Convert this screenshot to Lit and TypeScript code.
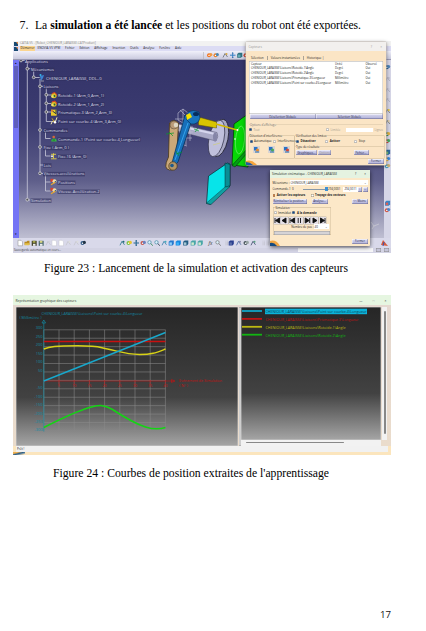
import { LitElement, html, svg, css } from "lit";
import { customElement } from "lit/decorators.js";

const txt = (x: number, y: number, size: number, fill: string, s: string, len?: number, anchor = "start") =>
  len
    ? svg`<text x=${x} y=${y} font-size=${size} fill=${fill} text-anchor=${anchor} textLength=${len} lengthAdjust="spacingAndGlyphs">${s}</text>`
    : svg`<text x=${x} y=${y} font-size=${size} fill=${fill} text-anchor=${anchor}>${s}</text>`;

const shared = css`
  * { box-sizing: border-box; }
  svg { display: block; }
  .btn {
    background: linear-gradient(#dadaf0, #adadd6);
    box-shadow: inset -.4px -.4px 0 #66668c, inset .4px .4px 0 #fff;
    height: 5px;
    display: flex;
    align-items: center;
    justify-content: center;
    white-space: nowrap;
    color: #222244;
  }
  .off { color: #a8a090; }
  .radio { width: 3px; height: 3px; border-radius: 50%; background: #fff; box-shadow: inset 0 0 0 .4px #888; flex: none; margin-right: 1.5px; }
  .radio.on { background: #124a8c; }
  .row { display: flex; align-items: center; white-space: nowrap; }
  .grow { flex: 1; }
  b { font-weight: 700; }
`;

/* ---------- Small toolbar glyphs ---------- */
const glyph = (kind: string, a: string, b: string) => {
  switch (kind) {
    case "page": return svg`<path d="M1 .5h3l1.500 1.500v4h-4.500z" fill="#fff" stroke=${a} stroke-width=".5"/>`;
    case "folder": return svg`<path d="M.5 2h2l1-1h2v4h-5z" fill=${a}/><path d="M1 3.500h5l-1 2h-4.500z" fill=${b}/>`;
    case "disk": return svg`<rect x=".7" y="1" width="5" height="5" fill=${a}/><rect x="1.800" y="1" width="2.600" height="2" fill=${b}/><rect x="2" y="4" width="2.500" height="2" fill="#eee"/>`;
    case "lens": return svg`<circle cx="2.500" cy="2.500" r="1.700" fill="#d9f0fa" stroke=${a} stroke-width=".7"/><path d="M3.700 3.700l2.200 2.200" stroke=${b} stroke-width=".9"/>`;
    case "move": return svg`<path d="M3.200 .5v5.500M.5 3.200h5.500" stroke=${a} stroke-width="1"/><path d="M2.200 1.500l1-1.300 1 1.300M2.200 5l1 1.300 1-1.300" fill=${b}/>`;
    case "cube": return svg`<path d="M.7 2l1.500-1.300h3.600v3.600l-1.300 1.400h-3.800z" fill=${a}/><path d="M1.400 2.600h2.500v2.500h-2.500z" fill=${b}/>`;
    case "gear": return svg`<circle cx="2.500" cy="3.200" r="2" fill=${a}/><circle cx="4.300" cy="2.600" r="1.600" fill=${b}/><circle cx="2.500" cy="3.400" r=".7" fill="#fff"/>`;
    case "fx": return svg`<text x="0" y="5" font-size="5" font-style="italic" fill=${a}>fx</text>`;
    case "dots": return svg`<path d="M3 1v5M4.500 1v5" stroke=${a} stroke-width=".4" stroke-dasharray=".6 .6"/>`;
    default: return svg`<path d="M1 5.500l2-4 2.500 3.500" fill="none" stroke=${a} stroke-width=".8"/><circle cx="4.500" cy="2" r="1" fill=${b}/>`;
  }
};
const icon = (x: number, y: number, kind: string, a: string, b: string) =>
  svg`<g transform="translate(${x} ${y})">${glyph(kind, a, b)}</g>`;

type Ic = [number, string, string, string];
const bottomIcons: Ic[] = [
  [4, "page", "#888", ""], [11, "folder", "#b88a22", "#e4c04a"], [18, "disk", "#45452a", "#a8a84d"], [25, "disk", "#4e6b70", "#d8d480"],
  [32, "x", "#c2c2cc", "#d4d4dc"], [38, "page", "#c5c5cc", ""], [45, "page", "#c5c5cc", ""], [52, "x", "#c5c5cc", "#ddd"], [60, "x", "#c5c5cc", "#ddd"], [67, "gear", "#355f8a", "#234"],
  [106, "x", "#26758d", "#267"], [113, "gear", "#7ac243", "#e8c530"], [120, "move", "#256790", "#17567f"], [127, "gear", "#c65a50", "#6b82c0"],
  [134, "lens", "#4a87a5", "#385"], [141, "lens", "#4a87a5", "#345"], [148, "x", "#367fa8", "#4ab"], [155, "cube", "#2678ce", "#8fd0fa"],
  [162, "cube", "#1686df", "#3db5fa"], [169.500, "cube", "#235c83", "#a7c8d6"], [177, "cube", "#4aa6a8", "#d5ecd0"], [184, "cube", "#4aa6a8", "#d5ecd0"],
  [195.500, "fx", "#333", ""], [202, "lens", "#777", "#777"], [210, "dots", "#888", ""], [215, "cube", "#2a3f90", "#5b6ea8"], [222.500, "x", "#4a68a0", "#88a"],
  [230, "gear", "#48555c", "#97a4a4"], [237, "x", "#384668", "#58a080"], [247, "dots", "#999", ""], [251, "dots", "#999", ""],
];
const sideIcons: [number, string, string, string][] = [
  [64, "gear", "#28608f", "#4b83b8"], [76, "x", "#aab", "#bbc"], [87, "x", "#aab", "#ccd"], [97, "x", "#aab", "#ccd"],
  [108, "x", "#776", "#e8c83a"], [119, "x", "#776", "#dca"], [131, "gear", "#3f8c52", "#e0b040"], [138, "gear", "#d04838", "#49a860"],
  [149, "cube", "#2d6c9e", "#79c07c"], [156, "gear", "#e8b43a", "#3c8adc"], [163, "gear", "#4c9fc0", "#c8b070"], [200, "cube", "#3a87c6", "#d86058"], [207, "gear", "#d05848", "#4d86c9"],
];

/* ---------- Specification tree ---------- */
interface Node { x: number; y: number; s: string; w: number; k?: string; }
const nodes: Node[] = [
  { x: 25, y: 61, s: "Applications", w: 23 },
  { x: 31, y: 69.300, s: "Mécanismes", w: 23 },
  { x: 46, y: 78, s: "CHENIOUR_LARAISSE, DDL=0", w: 55.500, k: "mech" },
  { x: 43.500, y: 86.500, s: "Liaisons", w: 15 },
  { x: 58, y: 95.500, s: "Rotoïde.1 (Arm_0,Arm_1)", w: 46, k: "joint" },
  { x: 58, y: 104, s: "Rotoïde.2 (Arm_1,Arm_2)", w: 46, k: "joint" },
  { x: 58, y: 112.700, s: "Prismatique.3 (Arm_2,Arm_3)", w: 54, k: "prism" },
  { x: 58, y: 121.300, s: "Point sur courbe.4 (Arm_3,Arm_0)", w: 63, k: "point" },
  { x: 43.500, y: 130.200, s: "Commandes", w: 24 },
  { x: 58, y: 139, s: "Commande.1 (Point sur courbe.4,Longueur)", w: 82, k: "cmd" },
  { x: 43.500, y: 147.500, s: "Fixe ( Arm_0 )", w: 25.500 },
  { x: 58, y: 156.300, s: "Fixe.16 (Arm_0)", w: 28.500, k: "fix" },
  { x: 43.500, y: 165, s: "Lois", w: 7.500 },
  { x: 43.500, y: 173.700, s: "Vitesses-accélérations", w: 41 },
  { x: 58, y: 182.300, s: "Positions", w: 17, k: "pos" },
  { x: 58, y: 191.300, s: "Vitesse-Accélération.2", w: 41.500, k: "pos" },
  { x: 31, y: 200.200, s: "Simulation", w: 20 },
];
const treeIcon = (n: Node) => {
  const x = n.x - 7, y = n.y - 3;
  if (n.k === "mech") return svg`<path d="M${x + 1} ${y + 1}l4-1-1 3-2 3z" fill="#3d83d1"/><circle cx=${x + 1.500} cy=${y} r="1" fill="#35b8e8"/><path d="M${x + 2} ${y + 6}h3" stroke="#bbb" stroke-width=".7"/>`;
  if (n.k === "joint") return svg`<circle cx=${x + 3} cy=${y + 3} r="2.700" fill="#d9bd28"/><circle cx=${x + 1.500} cy=${y + 4} r="1.300" fill="#efe36a"/><path d="M${x + 1} ${y + 1}l3-1 2 3" stroke="#d63a22" stroke-width="1" fill="none"/><circle cx=${x + 3.500} cy=${y + 3.500} r=".9" fill="#26633a"/>`;
  if (n.k === "prism") return svg`<rect x=${x} y=${y} width="5.600" height="6" fill="#e8c92c"/><path d="M${x + 1} ${y + 1}l4 3v-4" stroke="#28384a" fill="none"/><path d="M${x} ${y}h2v2h-2z" fill="#d83"/>`;
  if (n.k === "point") return svg`<path d="M${x} ${y + 6}q1-4 3-3t3-4" stroke="#f1e9b0" fill="none"/><path d="M${x + 1} ${y}l3 5" stroke="#c9a32b"/><circle cx=${x + 4} cy=${y + 4} r="1.200" fill="#fff"/>`;
  if (n.k === "cmd") return svg`<path d="M${x + .3} ${y + 5.500}q0-3 2.700-3t2.700 3z" fill="#35b842"/><circle cx=${x + 2.700} cy=${y + 1} r="1.300" fill="#d06a38"/><path d="M${x + 1.500} ${y + 4}h2.500" stroke="#155c25" stroke-width=".8"/>`;
  if (n.k === "fix") return svg`<path d="M${x} ${y + 1}h5M${x + 2.500} ${y}v5M${x} ${y + 5.500}h5.500" stroke="#e2d34b" stroke-width=".9"/><circle cx=${x + 1} cy=${y + 3} r="1" fill="#eee"/>`;
  return svg`<rect x=${x - .5} y=${y - .5} width="3" height="3" fill="#d8432d"/><circle cx=${x + 3.500} cy=${y + 2} r="2" fill="#ece0b0"/><path d="M${x} ${y + 5.500}l5-3" stroke="#e6a62e" stroke-width="1.300"/><circle cx=${x + 4.500} cy=${y + 2.500} r=".8" fill="#33558a"/>`;
};
const bullets = [[27.300, 68.700], [33.700, 77.300], [40, 86.300], [46.300, 94.800], [46.300, 103.300], [46.300, 112], [40, 130], [40, 147], [40, 173.300], [27.300, 199.700], [21, 60.500]];

const LIAISON = "CHENIOUR_LARAISSE\\Liaisons\\";
const sensors = [
  ["Rotoïde.1\\Angle", "Degré"], ["Rotoïde.2\\Angle", "Degré"],
  ["Prismatique.3\\Longueur", "Millimètre"], ["Point sur courbe.4\\Longueur", "Millimètre"],
];

@customElement("sensor-dialog")
class SensorDialog extends LitElement {
  static styles = [shared, css`
    :host { display: flex; flex-direction: column; width: 140px; height: 123px; background: #fbe5c5; font: 2.9px/4px "Open Sans", sans-serif; color: #222; border-radius: 1px; box-shadow: 0 0 0 .4px #cfc6bd, 0 1px 4px #0008; position: relative; }
    .title { height: 9px; background: #f2f0ee; color: #999; padding: 0 4px 0 2.500px; gap: 8px; font-size: 3.2px; }
    .tabs { height: 9.500px; padding: 3px 5px 0; gap: 4px; font-size: 3px; }
    .tabs span + span { box-shadow: -.6px 0 0 #777; padding-left: 3px; }
    .list { background: #fff; margin: 0 3px; height: 53px; box-shadow: inset 0 0 0 .4px #aaa; padding: 1px 2px; display: grid; grid-template-columns: 84px 30.500px 1fr; grid-auto-rows: 4.700px; align-content: start; white-space: nowrap; }
    .pair { display: grid; grid-template-columns: 1fr 1fr; margin: 0 3px; padding: .5px; height: 6px; column-gap: .5px; }
    .opt { height: 9px; margin: 5px 3px 0; color: #777; box-shadow: 0 -.4px 0 #cdbb9e; display: flex; flex-direction: column; }
    .cap { margin-top: -2px; margin-left: 1px; background: #fbe5c5; align-self: flex-start; }
    .opt .row { margin-top: 1px; }
    .field { flex: 1; height: 4px; background: #fff; max-width: 27px; margin: 0 1px 0 6px; }
    .cols { display: grid; grid-template-columns: 45px 1fr; gap: 1.500px; margin: 2.500px 2.500px 0; height: 22px; }
    .set { box-shadow: 0 0 0 .4px #c2ae8c; display: flex; flex-direction: column; }
    .set > .row { margin-top: 1px; padding-left: 1px; }
    .types { display: flex; flex-direction: column; box-shadow: 0 -.4px 0 #c2ae8c; margin-top: 4px; }
    .types .row { margin-top: 1px; padding-left: 1px; }
    .icons { display: flex; justify-content: space-around; padding-top: 2.500px; }
    .foot { padding: 0 2px 1px; justify-content: flex-end; position: relative; flex: 1; }
    .corner { position: absolute; left: 0; bottom: 0; }
  `];
  render() {
    return html`
      <div class="row title"><span class="grow">Capteurs</span><span>?</span><span>×</span></div>
      <div class="row tabs"><span>Sélection</span><span>Valeurs instantanées</span><span>Historique |</span></div>
      <div class="list"><span>Capteur</span><span>Unité</span><span>Observé</span>
        ${sensors.map(([n, u]) => html`<span>${LIAISON}${n}</span><span>${u}</span><span>Oui</span>`)}
      </div>
      <div class="pair"><div class="btn">Désélection Globale</div><div class="btn">Sélection Globale</div></div>
      <div class="opt"><span class="cap">Options d'affichage</span>
        <div class="row off"><i class="radio on"></i><span class="grow">Tout</span><i class="radio"></i>Limitée<i class="field"></i>Lignes</div></div>
      <div class="cols">
        <div class="set"><span class="cap">Détection d'interférence</span>
          <div class="row"><i class="radio on"></i>Automatique&nbsp;&nbsp;<i class="radio"></i>Interférences</div>
          <div class="icons">${["#e88a2d", "#4ca65a", "#d84834"].map((c) => html`<svg width="7" height="7" viewBox="0 0 7 7"><rect width="7" height="7" fill="#d9d4d2"/><rect x="1" y="1" width="3.500" height="3.500" fill="#2b72c4"/><circle cx="4.500" cy="4" r="1.600" fill=${c}/><path d="M2 6h4" stroke="#246bb0"/></svg>`)}</div>
        </div>
        <div class="set"><span class="cap">Vérification des limites</span>
          <div class="row"><i class="radio on"></i><b class="grow">Désactiver</b><i class="radio"></i><b class="grow">Activer</b><i class="radio"></i><span class="grow">Stop</span></div>
          <div class="types"><span class="cap">Type de résultats</span>
            <div class="row"><div class="btn" style="width:21px">Graphiques...</div><div class="btn off" style="width:13px;margin-left:1px">Options</div><span class="grow"></span><div class="btn" style="width:15px;margin-right:15px">Fichier...</div></div>
          </div>
        </div>
      </div>
      <div class="row foot"><svg class="corner" width="12" height="5" viewBox="0 0 12 5"><path d="M0 1q6-2 11 4h-11z" fill="#f5a43a"/><path d="M0 2q4 0 7 3h-7z" fill="#205ca0"/></svg><div class="btn" style="width:16px">Fermer</div></div>`;
  }
}

@customElement("kinematic-dialog")
class KinematicDialog extends LitElement {
  static styles = [shared, css`
    :host { display: flex; flex-direction: column; width: 100px; height: 76px; background: #fce8c8; font: 2.9px/4px "Open Sans", sans-serif; color: #222; border-radius: 1px; box-shadow: 0 1px 4px #000a; position: relative; }
    .title { height: 8px; background: #e5f3e1; padding: 0 4px 0 2px; font-size: 3px; gap: 8px; }
    .body { display: flex; flex-direction: column; padding: 1.500px 2.500px 0; }
    .body > .row { height: 6.200px; }
    .combo { background: #fff; height: 5px; display: flex; justify-content: space-between; align-items: center; padding: 0 1px; flex: 1; }
    .slider { width: 23px; height: .8px; background: #8799aa; margin: 0 3px 0 9px; }
    .thumb { width: 2.500px; height: 4px; background: #3f91d4; margin-left: -3px; margin-right: .5px; }
    .box { width: 2.800px; height: 2.800px; background: #fff; box-shadow: inset 0 0 0 .4px #97886d; margin-right: 1.500px; }
    .box.on { background: #e87832; }
    .set { width: 58px; height: 28px; box-shadow: inset 0 0 0 .4px #c6b28f; margin-top: 2.500px; display: flex; flex-direction: column; padding: 0 1px; }
    .cap { margin-top: -1.500px; margin-left: 2px; background: #fce8c8; align-self: flex-start; }
    .play { display: grid; grid-template-columns: repeat(7, 7px); gap: .6px; margin-top: 2px; }
    .play svg { background: #e5e0e6; box-shadow: 0 0 0 .3px #999; }
    .set .row { margin-top: 1px; }
    .set .steps { justify-content: flex-end; height: 5.500px; padding-right: 1px; margin-top: .5px; }
    .bar { height: 4px; background: #d5d3d6; box-shadow: inset 0 0 0 .4px #999; margin-top: 1px; }
    .foot { position: absolute; right: 2px; bottom: 2.500px; width: 16px; }
    .corner { position: absolute; left: 0; bottom: 0; }
  `];
  render() {
    const shapes = ["M1 1v5M5.500 1v5l-4-2.500z", "M5 1v5l-4-2.500z", "M1 1v5M5.500 1v5l-4-2.500z", "M2.200 1v5M4.500 1v5", "M5.700 1v5M1.200 1v5l4-2.500z", "M2 1v5l4-2.500z", "M6 1v5M1.500 1v5l4-2.500z"];
    return html`
      <div class="row title"><span class="grow">Simulation cinématique - CHENIOUR_LARAISSE</span><span>?</span><span>×</span></div>
      <div class="body">
        <div class="row"><span style="width:17px">Mécanisme :</span><span class="combo"><span>CHENIOUR_LARAISSE</span><span>⌄</span></span></div>
        <div class="row"><span>Commande.1 &nbsp;0</span><i class="slider"></i><i class="thumb"></i><span>294,0001</span><span class="combo" style="margin-left:3px">294,0011</span><div class="btn" style="width:4px">÷</div><div class="btn" style="width:5px;margin-left:1px">...</div></div>
        <div class="row"><i class="box on"></i><b style="width:34px">Activer les capteurs</b><i class="box"></i><b>Traçage des vecteurs</b></div>
        <div class="row"><div class="btn" style="width:34px">Réinitialiser la position...</div><div class="btn" style="width:16px;margin-left:5px">Analyse...</div><span class="grow"></span><div class="btn" style="width:16px">&lt;&lt; Moins</div></div>
        <div class="set"><span class="cap">Simulation</span>
          <div class="row"><i class="radio"></i>Immédiat &nbsp;<i class="radio on"></i><b>A la demande</b></div>
          <div class="play">${shapes.map((d) => html`<svg width="7" height="7" viewBox="0 0 7 7"><path d=${d} fill="#111" stroke="#111" stroke-width=".9"/></svg>`)}</div>
          <div class="row steps">Nombre de pas :<span class="combo" style="max-width:15px">40<span>⌄</span></span></div>
          <div class="bar"></div>
        </div>
      </div>
      <svg class="corner" width="12" height="7" viewBox="0 0 12 7"><path d="M0 2q6-2 10 5h-10z" fill="#f2a845"/><path d="M0 4q4-1 7 3h-7z" fill="#164b80"/></svg>
      <div class="btn foot">Fermer</div>`;
  }
}

@customElement("cad-window")
class CadWindow extends LitElement {
  static styles = [shared, css`
    :host { display: block; width: 378px; height: 212px; position: relative; font: 3px/5px "Open Sans", sans-serif; color: #222; }
    .title { height: 5.500px; background: #f2f2f2; color: #888; padding-left: 1px; gap: 2px; font-size: 3.100px; }
    .menu { height: 5px; background: #dcdcf4; padding-left: 1px; gap: 4.800px; font-size: 3.100px; }
    .menu svg { margin-right: -2.800px; }
    .first { background: #fbd590; padding: 0 .5px; margin-right: -2.500px; }
    .tools { height: 9px; background: linear-gradient(#f0f0fa, #c6c6dc); box-shadow: inset 0 -.6px 0 #6e6e8a; width: 378px; }
    .mid { display: grid; grid-template-columns: 6px 1fr 7px; height: 178px; }
    .scroll { background: #7474f5; display: flex; flex-direction: column; justify-content: space-between; align-items: center; color: #000; padding: 1px 0; }
    .track { width: 4.500px; height: 62px; background: #5f5fbd; }
    .side { background: #d6d6e7; }
    .bottom { background: #d9d9ea; }
    .status { height: 5px; background: #d3d3e4; padding-left: 1px; font-size: 2.800px; color: #444; }
    .command { width: 75px; height: 4px; background: #f6f6f8; margin-right: 2px; }
    .cell { width: 5px; height: 4px; background: #c5c5d9; box-shadow: inset 0 0 0 .4px #888; margin: 0 2px 0 1px; }
    sensor-dialog { position: absolute; left: 233px; top: 1.500px; }
    kinematic-dialog { position: absolute; left: 257px; top: 129.500px; }
  `];
  logo() {
    return html`<svg width="4" height="4" viewBox="0 0 4 4"><rect width="4" height="4" fill="#194a72"/><path d="M2 0h2v2.500z" fill="#e5884a"/></svg>`;
  }
  render() {
    return html`
      <div class="row title">${this.logo()}CATIA V5 - [Robot_CHENIOUR_LARAISSE.CATProduct]</div>
      <div class="row menu">${this.logo()}<span class="first">Démarrer</span><span>ENOVIA V5 VPM</span>${["Fichier", "Edition", "Affichage", "Insertion", "Outils", "Analyse", "Fenêtre", "Aide"].map((m) => html`<span>${m}</span>`)}</div>
      <svg class="tools" width="378" height="9" viewBox="0 0 378 9">
        <path d="M190.500 1v7" stroke="#aaa" stroke-width=".5"/>
        ${icon(193.500, 1, "gear", "#ef7626", "#f39b42")}${icon(200, 1, "gear", "#e98432", "#4b88b2")}${icon(209, 1, "x", "#666b70", "#d8a942")}${icon(216.500, 1, "move", "#3680c6", "#3b6fae")}${icon(223.500, 1, "cube", "#2e7180", "#62a8b5")}${icon(230, 1, "gear", "#d24835", "#6a4")}
      </svg>
      <div class="mid">
        <div class="scroll"><span>▴</span><i class="track"></i><span class="grow"></span><span>▾</span></div>
        <svg width="365" height="178" viewBox="19 60 365 178">
          <defs><linearGradient id="sky" x1="0" y1="0" x2="0" y2="1"><stop offset="0" stop-color="#343469"/><stop offset=".35" stop-color="#3b3b70"/><stop offset=".68" stop-color="#5f5f8b"/><stop offset="1" stop-color="#bfbfd2"/></linearGradient></defs>
          <rect x="19" y="60" width="365" height="178" fill="url(#sky)"/>
          <path d="M27.300 61v139h3M27.300 68.700h3M33.700 71v6.500h6M40 79v94.500h3M40 86.300h3M40 165h3M46.300 88v33.500h6M46.300 95h5M46.300 103.500h5M46.300 112h5M45.500 132v6.500h5M45.500 149v7h5M45.500 175v16h5M45.500 182h5M21 60.500h4" fill="none" stroke="#c9c9da" stroke-width=".8"/>
          ${bullets.map(([x, y]) => svg`<circle cx=${x} cy=${y} r="1.400" fill="#55555f" stroke="#ddd" stroke-width=".7"/>`)}
          ${nodes.map((n) => svg`<rect x=${n.x - .5} y=${n.y - 1.800} width=${n.w + 1} height="4.500" fill="#2e2e5b" opacity=".6"/>${txt(n.x, n.y + 1.500, 4, "#dcdce8", n.s, n.w)}${n.k ? treeIcon(n) : ""}`)}

          <g stroke-linejoin="round">
            <path d="M234 124l14-10v53l-16-2z" fill="#06d606" stroke="#053d05" stroke-width=".8"/>
            <path d="M232 165.500l3 1.500 13-15v-4z" fill="#069b18" stroke="#052d08" stroke-width=".5"/>
            <ellipse cx="240" cy="140" rx="4.500" ry="14" fill="none" stroke="#b4ffb0" stroke-width=".4" transform="rotate(5 240 140)"/>
            <path d="M208.500 176l19-13 2.500 1v22l-19.500 18.500-4-1z" fill="#07e4e9" stroke="#05282e" stroke-width=".7"/>
            <path d="M225 163l5 1.500v21l-5 2z" fill="#0a8d94" stroke="#05282e" stroke-width=".5"/>
            <path d="M206.500 203l4.500 1.500 19-18-5 .5z" fill="#119fa2" stroke="#05282e" stroke-width=".4"/>
            <ellipse cx="219.500" cy="138" rx="8.500" ry="19" transform="rotate(12 219.500 138)" fill="#a8a8c5" stroke="#20202f" stroke-width=".8"/>
            <ellipse cx="216.500" cy="138.500" rx="7.500" ry="18.500" transform="rotate(12 216.500 138.500)" fill="#c0c0dc" stroke="#33334a" stroke-width=".7"/>
            <path d="M179 124l38 8.500q2 4-1 8.500l-39-10z" fill="#a9a9c7" stroke="#404058" stroke-width=".4"/>
            <path d="M179 126l36 8" stroke="#d6d6ee" stroke-width="2"/>
            <ellipse cx="215" cy="137" rx="2" ry="4.500" fill="#8585a8"/>
            <g fill="none" stroke="#c4c4d6" stroke-width=".6"><path d="M178 113l5-4 5 4v6l-5 4-5-3zM183 109v36M175 119h12M179 127h14M179 132h14M180 138h12M186 122v23M190 124v17M178 143l9 3M180 110l8 8"/></g>
            <path d="M198.500 117l18 5v6l-18-3z" fill="#d8c400" stroke="#5b5200" stroke-width=".5"/>
            <path d="M216 124l21 6" stroke="#d4b900" stroke-width="1.500"/><circle cx="237.500" cy="130" r="1" fill="#fff"/><circle cx="235" cy="139" r=".8" fill="#fff"/>
            <path d="M169.500 123q4-5 9 0l-2 36q0 12-7 11t-1-13z" fill="#caa879" stroke="#493719" stroke-width=".8"/>
            <circle cx="174" cy="125" r="4" fill="#b99a77" stroke="#50412b" stroke-width=".5"/><circle cx="176" cy="125" r="2.300" fill="#ded7c3"/>
            <path d="M185 115l7 5-14 42q-3 4-6 1z" fill="#176fba" stroke="#07375f" stroke-width=".8"/>
            <path d="M188 123l-13 37" stroke="#34a5ec" stroke-width="1"/>
            <circle cx="173" cy="166" r="4.200" fill="#b39567" stroke="#473516" stroke-width=".7"/><circle cx="172" cy="165.500" r="1.800" fill="#1e5b8a"/>
            <path d="M188 112q5-3 11 0l1 6q-2 7-9 6l-5-5z" fill="#1874bd" stroke="#062e53" stroke-width=".6"/>
            <ellipse cx="196" cy="114" rx="3" ry="2" fill="#062e5d"/><path d="M186 115l4-2 2 4-5 3z" fill="#f5e000"/>
            <path d="M166 134l8-1M169 132l4 4M176 154l6-2M176 151l3 5M194 129l5 2M195 132l3-4" stroke="#08992a" stroke-width=".7"/>
            <path d="M213 145l7-2" stroke="#d5d24f" stroke-width=".5"/>
            <path d="M371 222l3 4M374 226l-2 3M374 226l5-2" stroke="#ddd" stroke-width=".5"/>
          </g>
        </svg>
        <svg class="side" width="7" height="178" viewBox="384 60 7 178">${sideIcons.map(([y, k, a, b]) => icon(384.300, y, k, a, b))}</svg>
      </div>
      <svg class="bottom" width="378" height="9.500" viewBox="0 0 378 9.500">${bottomIcons.map(([x, k, a, b]) => icon(x, 1.800, k, a, b))}
        <path d="M368 7l2-5 5 6z" fill="#d65a3a"/><path d="M370 8l1-4" stroke="#3554b8"/></svg>
      <div class="row status"><span class="grow">Sauvegarde automatique en cours...</span><i class="command"></i><i class="cell"></i><i class="cell"></i></div>
      <sensor-dialog></sensor-dialog><kinematic-dialog></kinematic-dialog>`;
  }
}

const curves: [string, string, number][] = [
  ["M44.300 342H166", "#c81010", 1.700],
  ["M44.300 349.500C50 347 56 346.300 78 346.300S98 347.500 108 349.500S127 355 140 355S157 353 166 349.500", "#d8d216", 1.400],
  ["M44.300 428C60 420 78 411.500 90 408C100 405 106 405.500 113 410C126 418.500 138 425 146 427.500C154 430 160 430 166 428", "#14d414", 1.500],
  ["M44.300 381.500L166 333", "#18a8cc", 1.400],
];
const legend: [string, string, number, boolean][] = [
  ["Point sur courbe.4\\Longueur", "#10a3c4", 101, true], ["Prismatique.3\\Longueur", "#bd1414", 93, false],
  ["Rotoïde.1\\Angle", "#bcb812", 80, false], ["Rotoïde.2\\Angle", "#12b512", 80, false],
];

@customElement("curve-window")
class CurveWindow extends LitElement {
  static styles = [shared, css`
    :host { display: flex; flex-direction: column; width: 378px; height: 160px; background: #fbe5bd; box-shadow: inset 0 .7px 0 #8e9c94; font: 3.300px/5px "Open Sans", sans-serif; color: #222; }
    .title { height: 9.300px; background: #e6f6e1; margin-top: .7px; padding: 0 4.500px 0 2.500px; gap: 10px; color: #333; }
    .frame { display: grid; grid-template-columns: 222px 2px 140px 5px; column-gap: .7px; padding: 2.500px 0 0 3px; height: 141.500px; background: linear-gradient(#e5d8d0, #eadccc); }
    .divide { background: #f2f2f2; box-shadow: inset 0 0 0 .4px #999; }
    .right { display: flex; flex-direction: column; }
    .h { flex: 1; background: #f2f2f2; padding: 2px 37px 0 5px; }
    .h i { display: block; height: 1px; background: #888; border-radius: 1px; }
    .v { background: #f2f2f2; height: 133px; display: flex; flex-direction: column; align-items: center; padding: 4px 0 6px; }
    .v i { display: block; width: 2px; flex: 1; background: #888; border-radius: 1px; }
    .status { height: 5.500px; background: #f1f1f1; padding-left: 1px; margin: 0 3px; font-size: 3px; }
    .under { height: 3px; width: 12px; background: linear-gradient(165deg, #f0b050 25%, #265d8c 50%, #fbe5bd 90%); }
  `];
  render() {
    const cyan = "#128ba5", red = "#c41212";
    const grad = (id: string) => svg`<defs><linearGradient id=${id} x1="0" y1="0" x2="0" y2="1"><stop offset="0" stop-color="#262626"/><stop offset=".65" stop-color="#424242"/><stop offset="1" stop-color="#a5a5a5"/></linearGradient></defs>`;
    const ys = ["300", "250", "200", "150", "100", "50", "", "-50", "-100", "-150", "-200", "-250", "-300"];
    const cols = Array.from({ length: 9 }, (_, i) => 44.300 + i * 15.200);
    return html`
      <div class="row title"><span class="grow">Représentation graphique des capteurs</span><span>—</span><span style="color:#aaa">□</span><span>×</span></div>
      <div class="frame">
        <svg width="222" height="139" viewBox="16.500 307.500 222 139">${grad("ga")}
          <rect x="16.500" y="307.500" width="222" height="139" fill="url(#ga)" stroke="#ddd" stroke-width=".7"/>
          <g stroke="#8b8b8b" stroke-width=".55" fill="none">${cols.map((x) => svg`<path d="M${x} 330.300V431.500"/>`)}${ys.map((_, i) => svg`<path d="M44.300 ${330.300 + i * 8.430}H166"/>`)}</g>
          <path d="M44.300 323V432M42.500 323.500l1.800-3 1.800 3z" stroke=${cyan} stroke-width=".7" fill="none"/>
          <path d="M44.300 381.500H175M172 380l3.500 1.500-3.500 1.500z" stroke=${red} stroke-width=".6" fill="none"/>
          ${txt(42, 315.800, 4, cyan, LIAISON + "Point sur courbe.4\\Longueur", 101)}
          ${txt(20, 319.500, 4, cyan, "( Millimètre )", 22)}
          ${ys.map((s, i) => s ? txt(43, [329.500, 338, 346.500, 355, 363.500, 372, 0, 389.500, 398, 406.500, 415, 423.500, 431.500][i], 4, cyan, s, undefined, "end") : "")}
          ${cols.slice(1).map((x, i) => svg`<path d="M${x} 380.500v5" stroke=${red} stroke-width=".5"/>${txt(x, 387, 3.600, red, String((i + 1) * 5), undefined, "middle")}`)}
          ${txt(179.500, 382, 3.600, red, "Evénement de Simulation", 43)}${txt(179.500, 387, 3.600, red, "( N° )", 9)}
          ${curves.map(([d, c, w]) => svg`<path d=${d} fill="none" stroke=${c} stroke-width=${w}/>`)}
        </svg>
        <i class="divide"></i>
        <div class="right">
          <svg width="140" height="133" viewBox="242 307.500 140 133">${grad("gb")}
            <rect x="242" y="307.500" width="140" height="133" fill="url(#gb)" stroke="#ddd" stroke-width=".7"/>
            ${legend.map(([s, c, w, sel], i) => svg`<path d="M243 ${311.500 + i * 7.900}h20" stroke=${c} stroke-width="1.800"/>${sel ? svg`<rect x="266" y="309.200" width="102" height="5.500" fill="#0bb3d9"/>` : ""}${txt(266.500, 313.300 + i * 7.900, 3.800, sel ? "#0d3e50" : c, LIAISON + s, w)}`)}
          </svg>
          <div class="h"><i></i></div>
        </div>
        <div class="v"><i></i></div>
      </div>
      <div class="row status">Prêt !</div>
      <i class="under"></i>`;
  }
}

@customElement("app-root")
class AppRoot extends LitElement {
  static styles = css`
    :host { display: flex; flex-direction: column; width: 426px; height: 631px; background: #fff; box-sizing: border-box; padding: 18px 35px 0 13px; font: 12px/14px "Liberation Serif", serif; color: #111; overflow: hidden; }
    .item { display: flex; height: 22.800px; padding-left: 6.500px; white-space: nowrap; }
    .num { width: 15px; }
    .cap { white-space: nowrap; box-sizing: border-box; flex: none; }
    .one { height: 42px; padding: 8.500px 0 0 31px; }
    .two { padding: 11px 0 0 40px; }
    .page { margin-top: auto; height: 23.500px; align-self: flex-end; font: 500 9.700px/14px "Open Sans", sans-serif; }
    svg { display: block; }
  `;
  line(w: number, content: unknown) {
    return html`<svg width=${w + 4} height="16" viewBox="0 0 ${w + 4} 16"><text x="0" y="11" textLength=${w} lengthAdjust="spacingAndGlyphs">${content}</text></svg>`;
  }
  render() {
    return html`
      <div class="item"><span class="num">7.</span>${this.line(326, svg`La <tspan font-weight="700">simulation a été lancée</tspan> et les positions du robot ont été exportées.`)}</div>
      <cad-window></cad-window>
      <div class="cap one">${this.line(304, "Figure 23 : Lancement de la simulation et activation des capteurs")}</div>
      <curve-window></curve-window>
      <div class="cap two">${this.line(276, "Figure 24 : Courbes de position extraites de l'apprentissage")}</div>
      <div class="page">17</div>`;
  }
}
